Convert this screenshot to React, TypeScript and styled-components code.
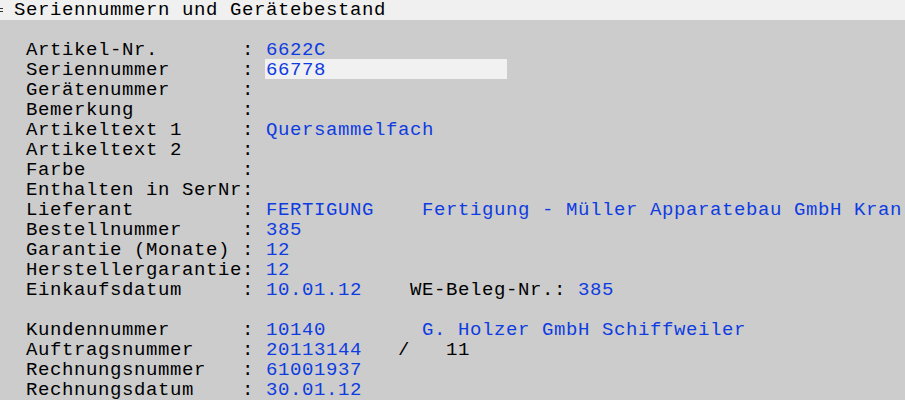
import * as React from 'react';
import styled, { createGlobalStyle } from 'styled-components';

const CELL = 12;

const GlobalStyle = createGlobalStyle`
  html, body {
    margin: 0;
    padding: 0;
    background: #cccccc;
    overflow: hidden;
  }
`;

const Screen = styled.div`
  width: 905px;
  height: 400px;
  overflow: hidden;
  background: #cccccc;
  font-family: 'Liberation Mono', 'DejaVu Sans Mono', monospace;
  font-size: 19px;
  letter-spacing: 0.6px;
  line-height: 20px;
  color: #000;
`;

const TitleBar = styled.div`
  height: 20px;
  background: #f0f0f0;
  display: flex;
  align-items: center;
  white-space: pre;
`;

const TitleMark = styled.div`
  width: 3px;
  height: 2px;
  margin: 0 11px 0 0;
  border-top: 1px solid #333;
  border-bottom: 1px solid #333;
`;

const Form = styled.div`
  padding: 20px 0 0 26px;
  display: flex;
  flex-direction: column;
`;

const Row = styled.div`
  display: flex;
  height: 20px;
  white-space: pre;
`;

const Gap = styled.div`
  height: 20px;
`;

const Label = styled.span`
  width: ${18 * CELL}px;
  flex: none;
`;

const Colon = styled.span`
  width: ${2 * CELL}px;
  flex: none;
`;

const Value = styled.span<{ $cols?: number; $black?: boolean }>`
  color: ${(p) => (p.$black ? '#000' : '#0f3ce1')};
  flex: none;
  ${(p) => (p.$cols ? `width: ${p.$cols * CELL}px;` : '')}
`;

const Input = styled.span`
  width: 242px;
  height: 20px;
  margin: -1px 0 0 -1px;
  padding: 1px 0 0 1px;
  box-sizing: border-box;
  background: #f1f1f1;
  color: #0f3ce1;
  flex: none;
`;

type Field = { label: string; children?: React.ReactNode };

const FieldRow = ({ label, children }: Field) => (
  <Row>
    <Label>{label}</Label>
    <Colon>:</Colon>
    {children}
  </Row>
);

const App = () => {
  return (
    <Screen>
      <GlobalStyle />
      <TitleBar>
        <TitleMark />
        Seriennummern und Gerätebestand
      </TitleBar>
      <Form>
        <FieldRow label="Artikel-Nr."><Value>6622C</Value></FieldRow>
        <FieldRow label="Seriennummer"><Input>66778</Input></FieldRow>
        <FieldRow label="Gerätenummer" />
        <FieldRow label="Bemerkung" />
        <FieldRow label="Artikeltext 1"><Value>Quersammelfach</Value></FieldRow>
        <FieldRow label="Artikeltext 2" />
        <FieldRow label="Farbe" />
        <FieldRow label="Enthalten in SerNr" />
        <FieldRow label="Lieferant">
          <Value $cols={13}>FERTIGUNG</Value>
          <Value>Fertigung - Müller Apparatebau GmbH Kran</Value>
        </FieldRow>
        <FieldRow label="Bestellnummer"><Value>385</Value></FieldRow>
        <FieldRow label="Garantie (Monate)"><Value>12</Value></FieldRow>
        <FieldRow label="Herstellergarantie"><Value>12</Value></FieldRow>
        <FieldRow label="Einkaufsdatum">
          <Value $cols={12}>10.01.12</Value>
          <Value $black $cols={14}>WE-Beleg-Nr.:</Value>
          <Value>385</Value>
        </FieldRow>
        <Gap />
        <FieldRow label="Kundennummer">
          <Value $cols={13}>10140</Value>
          <Value>G. Holzer GmbH Schiffweiler</Value>
        </FieldRow>
        <FieldRow label="Auftragsnummer">
          <Value $cols={11}>20113144</Value>
          <Value $black $cols={4}>/</Value>
          <Value $black>11</Value>
        </FieldRow>
        <FieldRow label="Rechnungsnummer"><Value>61001937</Value></FieldRow>
        <FieldRow label="Rechnungsdatum"><Value>30.01.12</Value></FieldRow>
      </Form>
    </Screen>
  );
};

export default App;
